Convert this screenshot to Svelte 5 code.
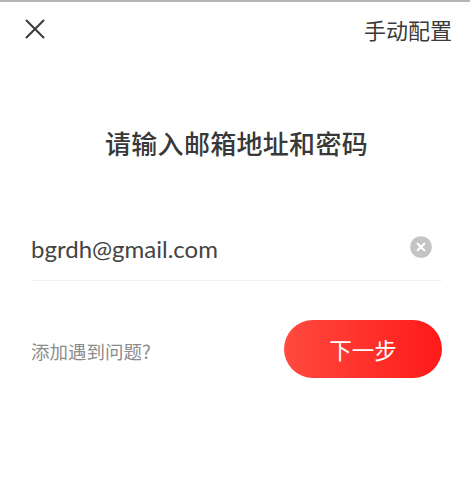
<script>
  let email = 'bgrdh@gmail.com';
</script>

<div class="page">
  <header class="top">
    <button class="close" aria-label="关闭">
      <svg width="20" height="20" viewBox="0 0 20 20"><path d="M1.5 1.5 18.5 18.5M18.5 1.5 1.5 18.5" stroke="#3a3a3a" stroke-width="2" fill="none" stroke-linecap="round"/></svg>
    </button>
    <span class="manual">手动配置</span>
  </header>
  <h1>请输入邮箱地址和密码</h1>
  <div class="field">
    <span class="email">{email}</span>
    <span class="clear" aria-hidden="true">
      <svg width="22" height="22" viewBox="0 0 22 22"><circle cx="11" cy="11" r="10.8" fill="#c4c4c4"/><path d="M7.7 7.7 14.3 14.3M14.3 7.7 7.7 14.3" stroke="#fff" stroke-width="2.2" stroke-linecap="round"/></svg>
    </span>
  </div>
  <div class="actions">
    <span class="help">添加遇到问题?</span>
    <button class="next">下一步</button>
  </div>
</div>

<style>
  :global(body) { margin: 0; background: #fff; }
  .page {
    width: 470px;
    height: 478px;
    box-sizing: border-box;
    border-top: 2px solid #b4b4b4;
    font-family: "Noto Sans CJK SC", "Noto Sans", sans-serif;
    overflow: hidden;
  }
  .top {
    display: flex;
    justify-content: space-between;
    align-items: flex-start;
    padding: 17px 18px 0 25px;
    height: 60px;
    box-sizing: border-box;
  }
  .close { padding: 0; border: 0; background: none; line-height: 0; width: 20px; height: 20px; }
  .manual { font-size: 22px; line-height: 28px; color: #3a3a3a; margin-top: -4px; }
  h1 {
    margin: 63px 0 0;
    padding-left: 3px;
    text-align: center;
    font-size: 26px;
    letter-spacing: 0.3px;
    line-height: 36px;
    font-weight: 500;
    color: #383838;
  }
  .field {
    margin: 59px 28px 0 31px;
    height: 61px;
    display: flex;
    justify-content: space-between;
    align-items: center;
    border-bottom: 1px solid #f2f2f2;
    padding: 0 10px 3px 0;
    box-sizing: border-box;
  }
  .email { font-family: Lato, "Noto Sans", sans-serif; font-size: 24px; color: #444; }
  .clear { line-height: 0; margin-top: -4px; }
  .actions {
    margin: 39px 28px 0 31px;
    display: flex;
    justify-content: space-between;
    align-items: center;
  }
  .help { font-size: 18.5px; color: #8c8c8c; padding-top: 4px; }
  .next {
    width: 158px;
    height: 58px;
    border: 0;
    border-radius: 29px;
    background: linear-gradient(90deg, #ff4a40, #ff1a18);
    color: #fff;
    font: inherit;
    font-size: 22.5px;
    padding: 0;
  }
</style>
